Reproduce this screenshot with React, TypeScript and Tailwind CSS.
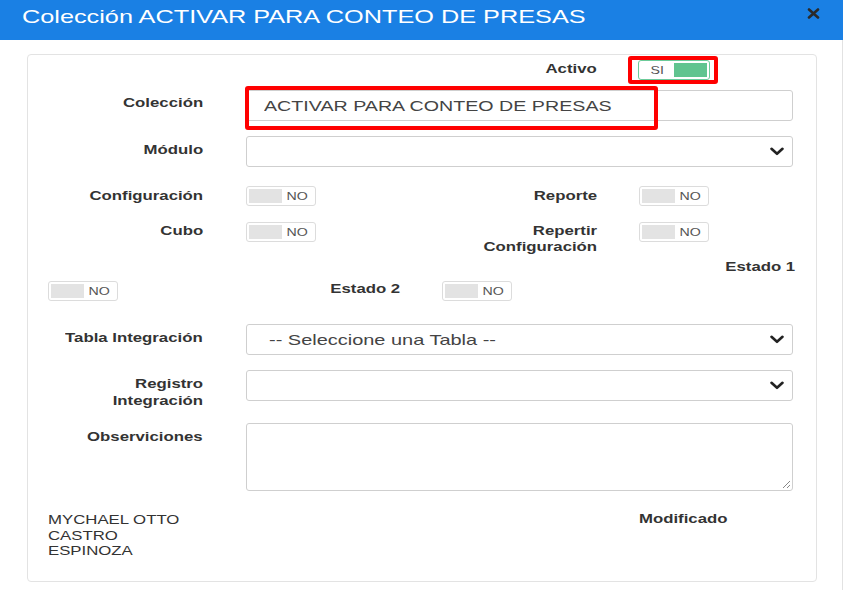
import React from "react";

const LR = "inline-block origin-right scale-x-[1.29] text-right";
const LL = "inline-block origin-left scale-x-[1.29]";
const LC = "inline-block scale-x-[1.29]";
const LBIG = "inline-block origin-left scale-x-[1.31]";
const LABEL = "w-[155px] shrink-0 text-right text-[13px] font-bold leading-[16px] text-[#333]";

function Toggle() {
  return (
    <div className="flex h-[20px] w-[70px] shrink-0 items-center rounded-[3px] border border-[#dcdcdc] bg-white p-[2px]">
      <div className="h-full w-[33px] bg-[#e3e3e3]" />
      <div className="flex flex-1 justify-center text-[11px] leading-none text-[#555]">
        <span className={LC}>NO</span>
      </div>
    </div>
  );
}

function Chevron() {
  return (
    <svg width="14" height="9" viewBox="0 0 14 9" className="shrink-0">
      <path d="M1.5 1.8 L7 6.8 L12.5 1.8" fill="none" stroke="#222" strokeWidth="2.6" strokeLinecap="round" strokeLinejoin="round" />
    </svg>
  );
}

function Select({ text }: { text?: string }) {
  return (
    <div className="flex h-[31px] w-[547px] items-center justify-between rounded-[3px] border border-[#cfcfcf] bg-white pl-[22px] pr-[8px]">
      <span className="text-[15px] leading-none text-[#444]">
        {text ? <span className="inline-block origin-left scale-x-[1.33]">{text}</span> : null}
      </span>
      <Chevron />
    </div>
  );
}

export default function App() {
  return (
    <div className="h-[590px] w-[845px] bg-white font-['Liberation_Sans',Arial,sans-serif]">
      <div className="flex h-[40px] w-[843px] items-start bg-[#1a80e4] pl-[22px] pr-[23px]">
        <div className="pt-[6px] text-[19px] leading-[22px] text-white">
          <span className="inline-block origin-left scale-x-[1.33]">Colección ACTIVAR PARA CONTEO DE PRESAS</span>
        </div>
        <svg width="13" height="11" viewBox="0 0 13 11" className="ml-auto mt-[8px]">
          <path d="M2 1.5 L11 9.5 M11 1.5 L2 9.5" stroke="#2a2a2a" strokeWidth="2.6" strokeLinecap="round" />
        </svg>
      </div>
      <div className="h-[550px] w-[843px] border-r border-[#e2e2e2] pt-[14px]">
        <div className="ml-[27px] w-[790px] rounded-[4px] border border-[#e3e3e3] px-[20px] pb-[22px] pt-[5px]">
          {/* Activo */}
          <div className="flex h-[20px]">
            <div className="w-[394px]" />
            <div className="flex items-center">
              <div className={`${LABEL} -mt-[2px]`}>
                <span className={LR}>Activo</span>
              </div>
              <div className="relative ml-[41px]">
                <div className="flex h-[20px] w-[72px] items-center rounded-[3px] border border-[#6ccb9a] bg-white p-[2px]">
                  <div className="flex flex-1 justify-center text-[11px] leading-none text-[#555]">
                    <span className={LC}>SI</span>
                  </div>
                  <div className="h-full w-[33px] bg-[#60c48f]" />
                </div>
                <div className="absolute -left-[10px] -top-[4px] h-[28px] w-[90px] rounded-[3px] border-[4px] border-[#ff0000]" />
              </div>
            </div>
          </div>

          {/* Colección */}
          <div className="mt-[10px] flex items-start">
            <div className={`${LABEL} pt-[5px]`}>
              <span className={LR}>Colección</span>
            </div>
            <div className="relative ml-[43px]">
              <div className="flex h-[31px] w-[547px] items-center rounded-[3px] border border-[#cfcfcf] bg-white pl-[17px] text-[15px] leading-none text-[#444]">
                <span className={LBIG}>ACTIVAR PARA CONTEO DE PRESAS</span>
              </div>
              <div className="absolute -left-[1px] -top-[4px] h-[44px] w-[413px] rounded-[3px] border-[4px] border-[#ff0000]" />
            </div>
          </div>

          {/* Módulo */}
          <div className="mt-[15px] flex items-start">
            <div className={`${LABEL} pt-[6px]`}>
              <span className={LR}>Módulo</span>
            </div>
            <div className="ml-[43px]">
              <Select />
            </div>
          </div>

          {/* Configuración / Reporte */}
          <div className="mt-[19px] flex">
            <div className="flex w-[394px] items-center">
              <div className={LABEL}>
                <span className={LR}>Configuración</span>
              </div>
              <div className="ml-[43px]">
                <Toggle />
              </div>
            </div>
            <div className="flex items-center">
              <div className={LABEL}>
                <span className={LR}>Reporte</span>
              </div>
              <div className="ml-[42px]">
                <Toggle />
              </div>
            </div>
          </div>

          {/* Cubo / Repertir */}
          <div className="mt-[16px] flex">
            <div className="flex w-[394px] items-start">
              <div className={`${LABEL} pt-px`}>
                <span className={LR}>Cubo</span>
              </div>
              <div className="ml-[43px]">
                <Toggle />
              </div>
            </div>
            <div className="flex items-start">
              <div className={`${LABEL} pt-px`}>
                <span className={LR}>
                  Repertir
                  <br />
                  Configuración
                </span>
              </div>
              <div className="ml-[42px]">
                <Toggle />
              </div>
            </div>
          </div>

          {/* Estado 1 */}
          <div className="mt-[4px] pr-[1px] text-right text-[13px] font-bold leading-[16px] text-[#333]">
            <span className={LR}>Estado 1</span>
          </div>

          {/* Estado toggles */}
          <div className="mt-[6px] flex">
            <div className="flex w-[394px] items-start">
              <Toggle />
              <div className="flex-1 pr-[42px] text-right text-[13px] font-bold leading-[16px] text-[#333]">
                <span className={LR}>Estado 2</span>
              </div>
            </div>
            <Toggle />
          </div>

          {/* Tabla Integración */}
          <div className="mt-[23px] flex items-start">
            <div className={`${LABEL} pt-[6px]`}>
              <span className={LR}>Tabla Integración</span>
            </div>
            <div className="ml-[43px]">
              <Select text="-- Seleccione una Tabla --" />
            </div>
          </div>

          {/* Registro Integración */}
          <div className="mt-[15px] flex h-[31px] items-start">
            <div className={`${LABEL} pt-[5px] leading-[17px]`}>
              <span className={LR}>
                Registro
                <br />
                Integración
              </span>
            </div>
            <div className="ml-[43px]">
              <Select />
            </div>
          </div>

          {/* Observiciones */}
          <div className="mt-[22px] flex items-start">
            <div className={`${LABEL} pt-[6px]`}>
              <span className={LR}>Observiciones</span>
            </div>
            <div className="relative ml-[43px] h-[68px] w-[547px] rounded-[3px] border border-[#cfcfcf] bg-white">
              <svg width="10" height="10" viewBox="0 0 10 10" className="absolute bottom-[1px] right-[1px]">
                <path d="M9 2 L2 9 M9 6 L6 9" stroke="#888" strokeWidth="1" />
              </svg>
            </div>
          </div>

          {/* Footer */}
          <div className="mt-[21px] flex text-[13px] leading-[15.5px] text-[#333]">
            <div className="w-[394px]">
              <span className={LL}>
                MYCHAEL OTTO
                <br />
                CASTRO
                <br />
                ESPINOZA
              </span>
            </div>
            <div className="-mt-px ml-[197px] font-bold">
              <span className={LL}>Modificado</span>
            </div>
          </div>
        </div>
      </div>
    </div>
  );
}
